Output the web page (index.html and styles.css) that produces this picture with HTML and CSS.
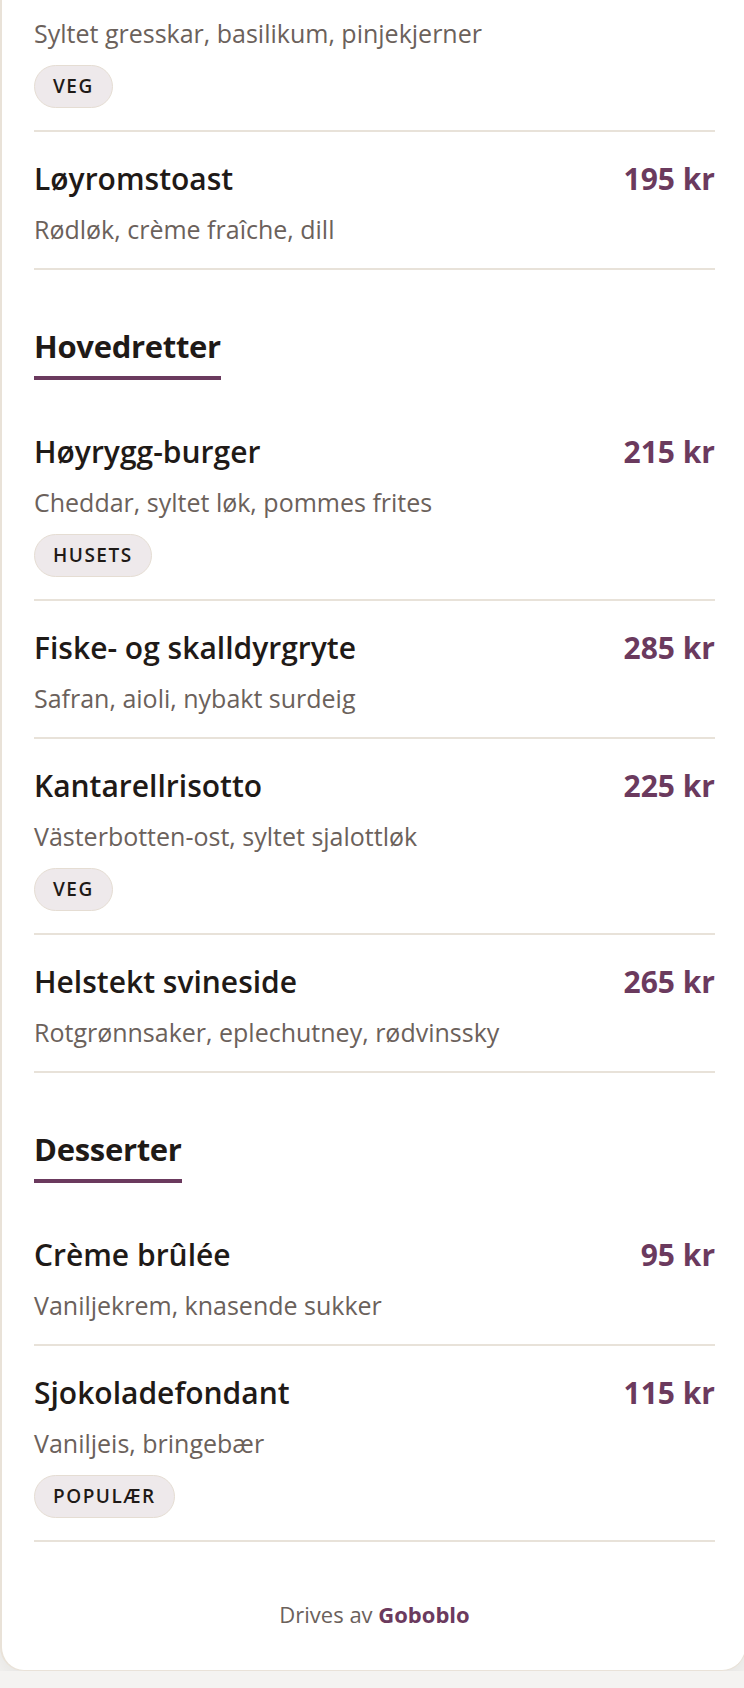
FILE: index.html
```html
<!DOCTYPE html>
<html lang="no">
<head>
    <meta charset="UTF-8">
    <meta name="viewport" content="width=device-width, initial-scale=1.0">
    <title>Meny</title>
    <link rel="stylesheet" href="styles.css">
</head>
<body>
    <div class="menu-card">
        <section class="menu-section">
            <div class="item item-cut">
                <p class="item-desc">Syltet gresskar, basilikum, pinjekjerner</p>
                <span class="tag">VEG</span>
            </div>
            <div class="item">
                <div class="item-head">
                    <h3 class="item-name">Løyromstoast</h3>
                    <span class="item-price">195 kr</span>
                </div>
                <p class="item-desc">Rødløk, crème fraîche, dill</p>
            </div>
        </section>

        <section class="menu-section">
            <h2 class="section-title">Hovedretter</h2>
            <div class="item">
                <div class="item-head">
                    <h3 class="item-name">Høyrygg-burger</h3>
                    <span class="item-price">215 kr</span>
                </div>
                <p class="item-desc">Cheddar, syltet løk, pommes frites</p>
                <span class="tag">HUSETS</span>
            </div>
            <div class="item">
                <div class="item-head">
                    <h3 class="item-name">Fiske- og skalldyrgryte</h3>
                    <span class="item-price">285 kr</span>
                </div>
                <p class="item-desc">Safran, aioli, nybakt surdeig</p>
            </div>
            <div class="item">
                <div class="item-head">
                    <h3 class="item-name">Kantarellrisotto</h3>
                    <span class="item-price">225 kr</span>
                </div>
                <p class="item-desc">Västerbotten-ost, syltet sjalottløk</p>
                <span class="tag">VEG</span>
            </div>
            <div class="item">
                <div class="item-head">
                    <h3 class="item-name">Helstekt svineside</h3>
                    <span class="item-price">265 kr</span>
                </div>
                <p class="item-desc">Rotgrønnsaker, eplechutney, rødvinssky</p>
            </div>
        </section>

        <section class="menu-section">
            <h2 class="section-title">Desserter</h2>
            <div class="item">
                <div class="item-head">
                    <h3 class="item-name">Crème brûlée</h3>
                    <span class="item-price">95 kr</span>
                </div>
                <p class="item-desc">Vaniljekrem, knasende sukker</p>
            </div>
            <div class="item">
                <div class="item-head">
                    <h3 class="item-name">Sjokoladefondant</h3>
                    <span class="item-price">115 kr</span>
                </div>
                <p class="item-desc">Vaniljeis, bringebær</p>
                <span class="tag">POPULÆR</span>
            </div>
        </section>

        <footer class="menu-footer">
            Drives av <a href="#" class="brand">Goboblo</a>
        </footer>
    </div>
</body>
</html>
```

FILE: styles.css
```css
body {
    margin: 0 0 18px;
    overflow-x: hidden;
    font-family: "Open Sans", "Noto Sans", sans-serif;
    background-color: #f4f3f1;
    color: #1f1a17;
}
.menu-card {
    margin-right: -2px;
    background-color: white;
    border: 1px solid #e9e2d8;
    border-left-width: 2px;
    border-top: none;
    border-radius: 0 0 24px 24px;
    padding: 0 30px 0 32px;
    box-shadow: 0 8px 24px rgba(0,0,0,0.07);
}
.menu-section + .menu-section {
    margin-top: 56px;
}
.section-title {
    width: fit-content;
    margin: 0 0 25px;
    padding-bottom: 10px;
    border-bottom: 4px solid #6b3a5e;
    font-size: 31px;
    line-height: 40px;
    font-weight: 700;
    letter-spacing: -0.3px;
}
.item {
    padding: 28px 0 22px;
    border-bottom: 2px solid #e8e2d9;
}
.item-cut {
    padding-top: 16px;
}
.item-head {
    display: flex;
    justify-content: space-between;
    align-items: baseline;
    gap: 16px;
}
.item-name {
    margin: 0;
    font-size: 30px;
    line-height: 38px;
    font-weight: 600;
}
.item-price {
    font-size: 30px;
    line-height: 38px;
    font-weight: 700;
    color: #6b3a5e;
    white-space: nowrap;
}
.item-desc {
    margin: 14px 0 0;
    font-size: 25px;
    line-height: 34px;
    color: #6b615b;
}
.item-desc:first-child {
    margin-top: 0;
}
.tag {
    display: block;
    width: fit-content;
    margin-top: 15px;
    padding: 8px 18px;
    border: 1px solid #e5ddd3;
    border-radius: 999px;
    background-color: #eee9eb;
    font-size: 19px;
    line-height: 25px;
    font-weight: 600;
    letter-spacing: 1.5px;
}
.menu-footer {
    padding: 57px 0 41px;
    text-align: center;
    font-size: 22px;
    line-height: 30px;
    color: #6b615b;
}
.brand {
    color: #6b3a5e;
    font-weight: 700;
    text-decoration: none;
}
```
